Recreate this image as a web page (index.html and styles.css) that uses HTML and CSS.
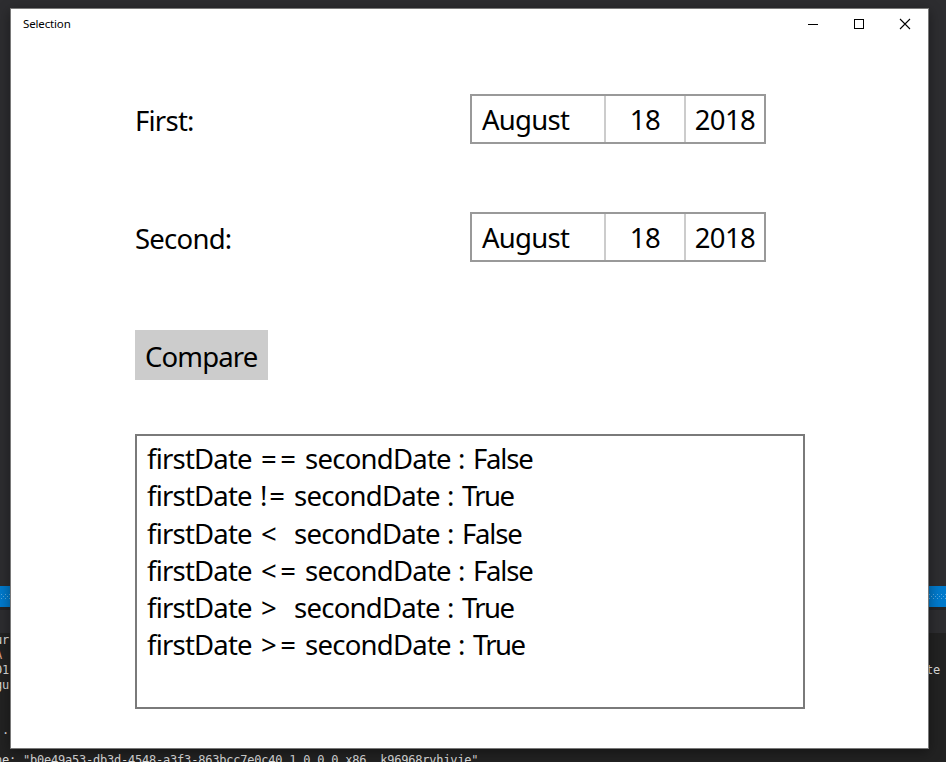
FILE: index.html
```html
<!DOCTYPE html>
<html lang="en">
<head>
<meta charset="utf-8">
<title>Selection</title>
<link rel="stylesheet" href="styles.css">
</head>
<body>
<div class="editor">
  <div class="editor-top"></div>
  <div class="panel-title"></div>
  <div class="panel-toolbar"></div>
  <div class="console">
    <div class="line"><span class="left">ur</span></div>
    <div class="line"><span class="far">A</span></div>
    <div class="line"><span class="left">01</span><span class="right">te</span></div>
    <div class="line"><span class="left">gu</span></div>
    <div class="line"></div>
    <div class="line"></div>
    <div class="line"><span class="dot">.</span></div>
    <div class="line"></div>
    <div class="line"><span class="name">ne: "b0e49a53-db3d-4548-a3f3-863bcc7e0c40_1.0.0.0_x86__k96968rvhjvje"</span></div>
  </div>
</div>
<main class="window">
  <header class="titlebar">
    <span class="title">Selection</span>
    <div class="controls">
      <svg width="46" height="30" viewBox="0 0 46 30" shape-rendering="crispEdges"><path d="M18 15.5h10" stroke="#000"/></svg>
      <svg width="46" height="30" viewBox="0 0 46 30" shape-rendering="crispEdges"><rect x="18.5" y="10.5" width="9" height="9" fill="none" stroke="#000"/></svg>
      <svg width="46" height="30" viewBox="0 0 46 30"><path d="M18 10l10 10M28 10l-10 10" stroke="#000" stroke-width="1.1"/></svg>
    </div>
  </header>
  <div class="content">
    <div class="row">
      <span class="label">First:</span>
      <div class="picker"><span class="month">August</span><span class="day">18</span><span class="year">2018</span></div>
    </div>
    <div class="row">
      <span class="label">Second:</span>
      <div class="picker"><span class="month">August</span><span class="day">18</span><span class="year">2018</span></div>
    </div>
    <button class="compare">Compare</button>
    <div class="output">
      <div><span class="a">firstDate</span><span class="op wide">==</span><span class="b">secondDate</span><span class="c">:</span><span class="r">False</span></div>
      <div><span class="a">firstDate</span><span class="op bang">!=</span><span class="b">secondDate</span><span class="c">:</span><span class="r true">True</span></div>
      <div><span class="a">firstDate</span><span class="op">&lt;</span><span class="b">secondDate</span><span class="c">:</span><span class="r">False</span></div>
      <div><span class="a">firstDate</span><span class="op wide">&lt;=</span><span class="b">secondDate</span><span class="c">:</span><span class="r">False</span></div>
      <div><span class="a">firstDate</span><span class="op">&gt;</span><span class="b">secondDate</span><span class="c">:</span><span class="r true">True</span></div>
      <div><span class="a">firstDate</span><span class="op wide">&gt;=</span><span class="b">secondDate</span><span class="c">:</span><span class="r true">True</span></div>
    </div>
  </div>
</main>
</body>
</html>
```

FILE: styles.css
```css
* { box-sizing: border-box; }
body {
  margin: 0;
  width: 946px;
  height: 762px;
  overflow: hidden;
  position: relative;
  font-family: "Noto Sans", "Open Sans", sans-serif;
  color: #000;
}
.editor { height: 762px; overflow: hidden; background: #222; }
.editor-top { height: 586px; background: #2d2d30; }
.panel-title { height: 21px; background: #007acc; padding: 8px 0; }
.panel-title::before {
  content: "";
  display: block;
  height: 5px;
  background:
    radial-gradient(circle at 0.5px 0.5px, #59a8de 0.6px, transparent 0.7px) 1px 0 / 4px 4px,
    radial-gradient(circle at 0.5px 0.5px, #59a8de 0.6px, transparent 0.7px) 3px 2px / 4px 4px;
}
.panel-toolbar { height: 26px; background: #2d2d30; border-top: 3px solid #252526; }
.console {
  font: 12px/15px "DejaVu Sans Mono", monospace;
  letter-spacing: -0.22px;
  color: #dcdcdc;
}
.line { height: 15px; display: flex; justify-content: space-between; white-space: pre; }
.left { margin-left: -5px; }
.far { margin-left: -5px; color: #d69d85; }
.right { margin-right: 6px; }
.dot { margin-left: 2px; }
.name { margin-left: -5px; }

.window {
  position: absolute;
  left: 10px;
  top: 8px;
  width: 919px;
  height: 741px;
  background: #fff;
  border: 1px solid #797979;
  box-shadow: 0 3px 12px rgba(0, 0, 0, 0.4);
}
.titlebar { height: 30px; display: flex; justify-content: space-between; }
.title { padding-left: 12px; font-size: 11.5px; line-height: 29px; letter-spacing: -0.15px; }
.controls { display: flex; }
.content { padding: 55px 123px 0 124px; font-size: 27.5px; }
.row { display: flex; justify-content: space-between; width: 631px; height: 50px; margin-bottom: 68px; }
.label { line-height: 53px; letter-spacing: -0.75px; }
.picker {
  width: 296px;
  height: 50px;
  display: grid;
  grid-template-columns: 132px 80px 80px;
  grid-template-rows: 46px;
  border: 2px solid #999;
  line-height: 48px;
}
.picker span { height: 46px; }
.month { padding-left: 10px; letter-spacing: -0.75px; }
.day, .year { border-left: 2px solid #ccc; text-align: center; letter-spacing: -0.6px; }
.compare {
  display: block;
  width: 133px;
  height: 50px;
  margin: 0 0 54px;
  padding: 3px 0 0 10px;
  border: 0;
  background: #ccc;
  font: 27.5px/47px "Noto Sans", "Open Sans", sans-serif;
  letter-spacing: -0.85px;
  text-align: left;
  color: #000;
}
.output {
  width: 670px;
  height: 275px;
  border: 2px solid #7a7a7a;
  padding: 4px 10px;
  line-height: 37.25px;
  white-space: nowrap;
}
.output > div { display: flex; height: 37.25px; }
.a { width: 113px; letter-spacing: -0.8px; }
.op { width: 34px; padding-left: 1px; }
.wide { width: 45px; letter-spacing: 3.4px; }
.bang { letter-spacing: 1.8px; padding-left: 0; }
.b { width: 153px; letter-spacing: -0.75px; }
.c { width: 15px; }
.r { letter-spacing: -1.2px; }
.true { letter-spacing: -1.6px; }
```
